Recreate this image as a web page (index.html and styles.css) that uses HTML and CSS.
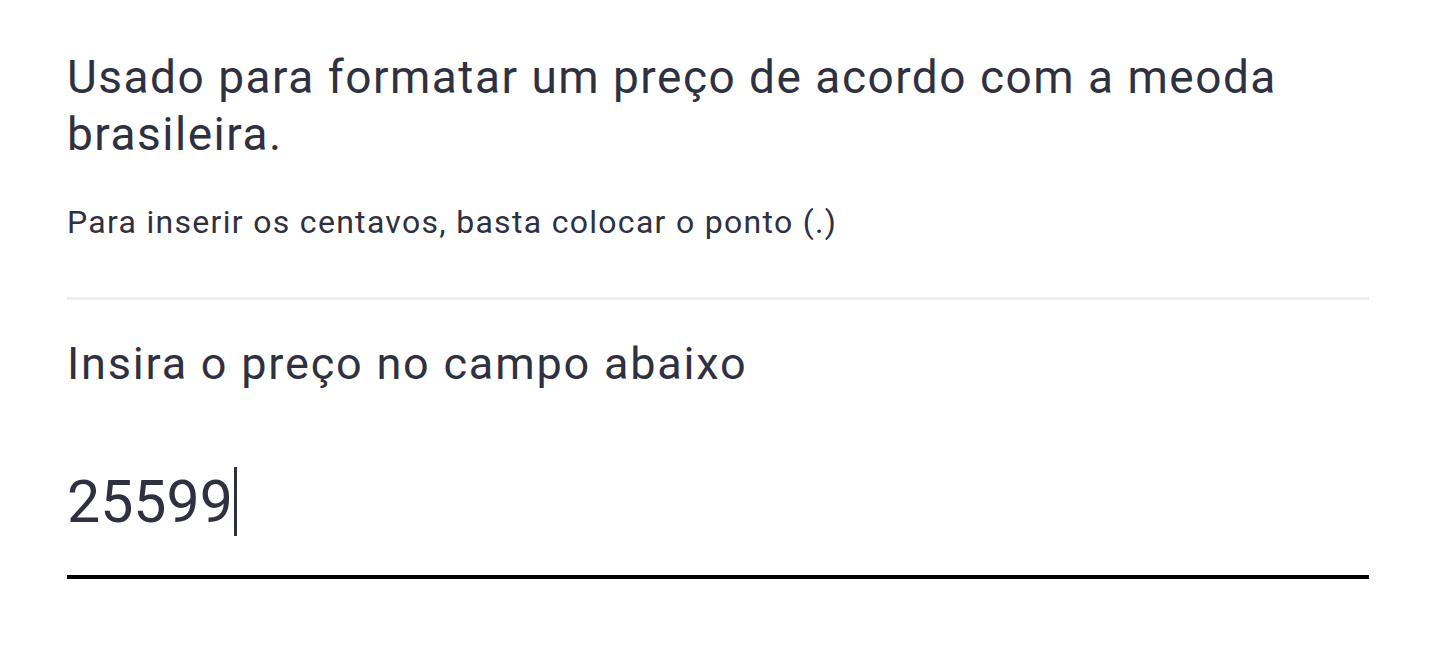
FILE: index.html
```html
<!DOCTYPE html>
<html lang="pt-BR">
<head>
<meta charset="utf-8">
<link rel="stylesheet" href="styles.css">
</head>
<body>
<main class="page">
  <p class="lead">Usado para formatar um preço de acordo com a meoda brasileira.</p>
  <p class="hint">Para inserir os centavos, basta colocar o ponto (.)</p>
  <hr class="divider">
  <p class="label">Insira o preço no campo abaixo</p>
  <div class="field">
    <span class="value">25599</span><span class="caret"></span>
  </div>
</main>
</body>
</html>
```
FILE: styles.css
```css
html, body {
  margin: 0;
  padding: 0;
  background: #ffffff;
}
body {
  font-family: Roboto, "Noto Sans", sans-serif;
  color: #2f3040;
}
.page {
  padding: 49px 65px 0 67px;
  display: flex;
  flex-direction: column;
}
.lead {
  margin: 0;
  font-size: 46px;
  line-height: 57px;
  letter-spacing: 1.5px;
  width: 1260px;
}
.hint {
  margin: 39px 0 0;
  font-size: 32px;
  line-height: 40px;
  letter-spacing: 1.3px;
}
.divider {
  margin: 55px 0 0;
  border: 0;
  height: 3px;
  background: #eeeeee;
}
.label {
  margin: 36px 0 0;
  font-size: 45px;
  line-height: 56px;
  letter-spacing: 1.8px;
}
.field {
  margin-top: 75px;
  display: flex;
  align-items: flex-start;
  border-bottom: 4px solid #000000;
  padding-bottom: 39px;
}
.value {
  font-size: 59px;
  line-height: 69px;
}
.caret {
  width: 3px;
  height: 69px;
  background: #2f3040;
  margin-left: 1px;
}
```
